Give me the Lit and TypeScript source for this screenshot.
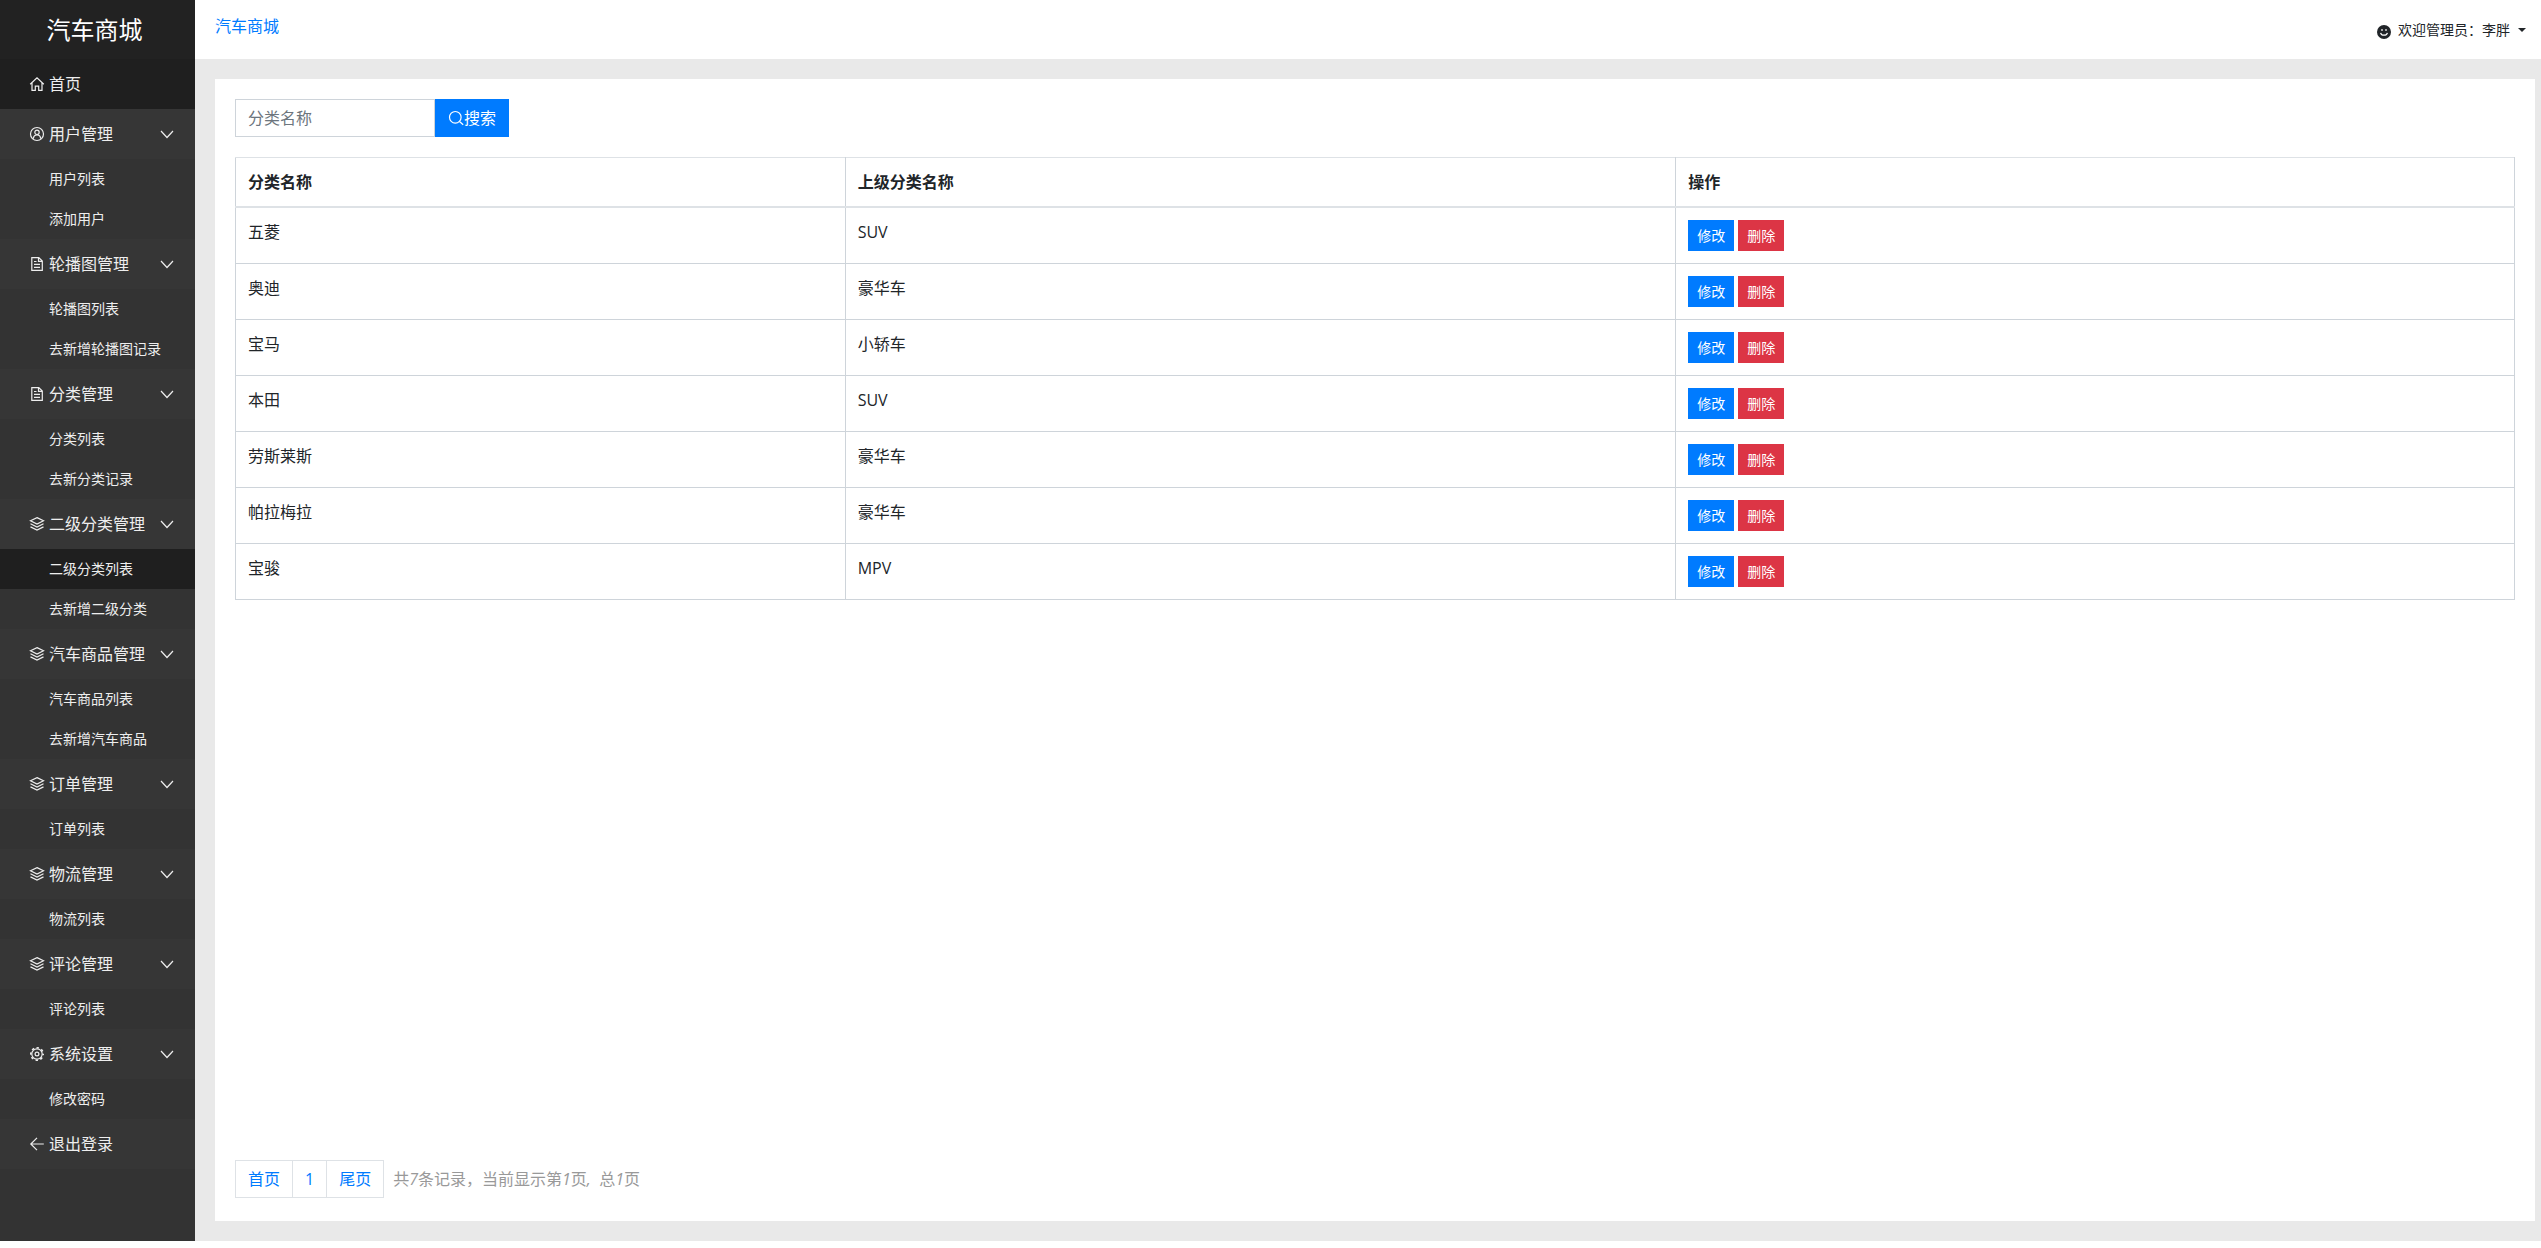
import { LitElement, html, css, svg, nothing } from "lit";
import { customElement, property, state } from "lit/decorators.js";
import { classMap } from "lit/directives/class-map.js";

type IconName = "home" | "user" | "doc" | "layers" | "gear" | "back" | "search" | "smile" | "chevron";

interface MenuGroup {
  icon: IconName;
  label: string;
  items?: string[];
}

const MENU: MenuGroup[] = [
  { icon: "home", label: "首页" },
  { icon: "user", label: "用户管理", items: ["用户列表", "添加用户"] },
  { icon: "doc", label: "轮播图管理", items: ["轮播图列表", "去新增轮播图记录"] },
  { icon: "doc", label: "分类管理", items: ["分类列表", "去新分类记录"] },
  { icon: "layers", label: "二级分类管理", items: ["二级分类列表", "去新增二级分类"] },
  { icon: "layers", label: "汽车商品管理", items: ["汽车商品列表", "去新增汽车商品"] },
  { icon: "layers", label: "订单管理", items: ["订单列表"] },
  { icon: "layers", label: "物流管理", items: ["物流列表"] },
  { icon: "layers", label: "评论管理", items: ["评论列表"] },
  { icon: "gear", label: "系统设置", items: ["修改密码"] },
  { icon: "back", label: "退出登录" },
];

const ROWS: [string, string][] = [
  ["五菱", "SUV"],
  ["奥迪", "豪华车"],
  ["宝马", "小轿车"],
  ["本田", "SUV"],
  ["劳斯莱斯", "豪华车"],
  ["帕拉梅拉", "豪华车"],
  ["宝骏", "MPV"],
];

const SHAPES = {
  home: svg`<path d="M1.200 8.200 8 1.800l6.800 6.400M3 7v7.400h3.300v-4.200h3.400v4.200H13V7"/>`,
  user: svg`<circle cx="8" cy="8" r="6.500"/><circle cx="8" cy="6.300" r="2.200"/><path d="M4.300 12.800c.2-2.600 1.600-4 3.700-4s3.500 1.400 3.700 4"/>`,
  doc: svg`<path d="M2.800 1.600h7l3.500 3.500v9.300H2.800zM9.500 1.800v3.600h3.600M5 5.500h2.500M5 8.300h6M5 11.300h6"/>`,
  layers: svg`<path d="M8 1.600 14.500 4.800 8 8 1.500 4.800zM1.500 7.800 8 11l6.500-3.200M1.500 10.900 8 14.100l6.500-3.200"/>`,
  gear: svg`<circle cx="8" cy="8" r="5.200"/><circle cx="8" cy="8" r="6.200" stroke-width="1.600" stroke-dasharray="2.435" stroke-dashoffset="1.217"/><circle cx="8" cy="8" r="1.900"/>`,
  back: svg`<path d="M14.800 8H2M8 1.800 1.800 8 8 14.200"/>`,
  search: svg`<circle cx="7.300" cy="7.300" r="5.800"/><path d="m11.500 11.500 3.700 3.300"/>`,
  smile: svg`<circle cx="8" cy="8" r="7" fill="currentColor" stroke="none"/><g stroke="#fff"><path d="M6 5v2M10 5v2M4.600 8.800c.8 3.200 6 3.200 6.800 0"/></g>`,
  chevron: svg`<path d="m2 5 6 6.500L14 5"/>`,
};

@customElement("ui-icon")
export class UiIcon extends LitElement {
  @property() name: IconName = "home";

  static styles = css`
    :host {
      display: inline-flex;
      flex: none;
      width: 16px;
      height: 16px;
    }
    .icon {
      width: 100%;
      height: 100%;
      fill: none;
      stroke: currentColor;
      stroke-width: 1.2;
    }
  `;

  render() {
    return html`<svg class="icon" viewBox="0 0 16 16" aria-hidden="true">${SHAPES[this.name]}</svg>`;
  }
}

@customElement("side-menu")
export class SideMenu extends LitElement {
  @state() private closed = new Set<string>();
  @property() current = "";

  static styles = css`
    :host {
      display: block;
      background: #333;
      color: #eee;
    }
    .brand {
      display: flex;
      align-items: center;
      justify-content: center;
      height: 59px;
      padding: 0 6px 0 0;
      box-sizing: border-box;
      background: #222;
      color: #fff;
      font-size: 24px;
    }
    .head {
      display: flex;
      align-items: center;
      gap: 4px;
      width: 100%;
      height: 50px;
      padding: 0 20px 0 29px;
      box-sizing: border-box;
      border: 0;
      background: #363636;
      color: inherit;
      font: inherit;
      text-align: left;
      text-decoration: none;
      cursor: pointer;
    }
    .label {
      flex: 1;
    }
    .head.home {
      background: #1f1f1f;
    }
    .item {
      display: flex;
      align-items: center;
      height: 40px;
      padding-left: 49px;
      color: inherit;
      font-size: 14px;
      text-decoration: none;
    }
    .item.current {
      background: #1f1f1f;
    }
  `;

  private toggle(label: string) {
    const next = new Set(this.closed);
    if (!next.delete(label)) next.add(label);
    this.closed = next;
  }

  private group(g: MenuGroup) {
    if (!g.items) {
      return html`<a class=${classMap({ head: true, home: g.icon === "home" })} href="#">
        <ui-icon name=${g.icon}></ui-icon><span class="label">${g.label}</span>
      </a>`;
    }
    const open = !this.closed.has(g.label);
    return html`
      <button class="head" type="button" aria-expanded=${open} @click=${() => this.toggle(g.label)}>
        <ui-icon name=${g.icon}></ui-icon><span class="label">${g.label}</span>
        <ui-icon name="chevron"></ui-icon>
      </button>
      ${open
        ? g.items.map(
            (i) => html`<a class=${classMap({ item: true, current: i === this.current })} href="#">${i}</a>`
          )
        : nothing}
    `;
  }

  render() {
    return html`
      <div class="brand">汽车商城</div>
      <nav>${MENU.map((g) => this.group(g))}</nav>
    `;
  }
}

@customElement("app-root")
export class AppRoot extends LitElement {
  static styles = css`
    :host {
      display: flex;
      min-height: calc(100vh - 7px);
      margin-bottom: 7px;
      background: #e9e9e9;
      color: #212529;
      font: 16px/24px "Open Sans", "Noto Sans CJK SC", sans-serif;
    }
    .side {
      flex: 0 0 195px;
    }
    .main {
      flex: 1;
      min-width: 0;
      display: flex;
      flex-direction: column;
    }
    .top {
      display: flex;
      justify-content: space-between;
      height: 59px;
      padding: 0 15px 0 20px;
      box-sizing: border-box;
      background: #fff;
    }
    a {
      color: #007bff;
      text-decoration: none;
    }
    .crumb {
      padding-top: 14px;
    }
    .account {
      display: flex;
      align-items: center;
      padding: 0;
      border: 0;
      background: none;
      color: inherit;
      font: inherit;
      font-size: 14px;
    }
    .face {
      margin: 4px 6px 0 0;
    }
    .caret {
      margin-left: 8px;
      border: 4px solid transparent;
      border-top-color: currentColor;
      border-bottom: 0;
    }
    .panel {
      flex: 1;
      display: flex;
      flex-direction: column;
      gap: 20px;
      margin: 20px 6px 20px 20px;
      padding: 20px 20px 23px;
      background: #fff;
    }
    .search {
      display: flex;
    }
    .field {
      width: 200px;
      height: 38px;
      padding: 6px 12px;
      box-sizing: border-box;
      border: 1px solid #ced4da;
      border-radius: 0;
      color: #495057;
      font: inherit;
    }
    .field::placeholder {
      color: #6c757d;
      opacity: 1;
    }
    .btn {
      display: inline-flex;
      align-items: center;
      padding: 6px 12px;
      border: 1px solid #007bff;
      background: #007bff;
      color: #fff;
      font: inherit;
      cursor: pointer;
    }
    .small {
      padding: 4px 8px;
      font-size: 14px;
      line-height: 21px;
    }
    .danger {
      border-color: #dc3545;
      background: #dc3545;
    }
    .table {
      width: 100%;
      border-collapse: collapse;
    }
    .col-name {
      width: 26.75%;
    }
    .col-parent {
      width: 36.45%;
    }
    .table th,
    .table td {
      padding: 12px;
      border: 1px solid #ced4da;
      text-align: left;
      vertical-align: top;
    }
    .table th {
      border-top-color: #dee2e6;
      border-bottom: 2px solid #dee2e6;
      font-weight: 700;
    }
    .actions {
      display: flex;
      gap: 4px;
    }
    .pager {
      display: flex;
      align-items: center;
      gap: 9px;
      margin-top: auto;
      color: #999;
    }
    .pages {
      display: flex;
      margin: 0;
      padding: 0 0 0 1px;
      list-style: none;
    }
    .page {
      display: block;
      margin-left: -1px;
      padding: 8px 12px;
      border: 1px solid #dee2e6;
      line-height: 20px;
    }
  `;

  render() {
    return html`
      <side-menu class="side" current="二级分类列表"></side-menu>
      <div class="main">
        <header class="top">
          <a class="crumb" href="#">汽车商城</a>
          <button class="account" type="button" aria-haspopup="true">
            <ui-icon class="face" name="smile"></ui-icon>
            <span>欢迎管理员：李胖</span>
            <span class="caret"></span>
          </button>
        </header>
        <main class="panel">
          <form class="search" @submit=${(e: Event) => e.preventDefault()}>
            <input class="field" type="text" placeholder="分类名称" aria-label="分类名称" />
            <button class="btn" type="submit"><ui-icon name="search"></ui-icon>搜索</button>
          </form>
          <table class="table">
            <thead>
              <tr><th class="col-name">分类名称</th><th class="col-parent">上级分类名称</th><th>操作</th></tr>
            </thead>
            <tbody>
              ${ROWS.map(
                ([name, parent]) => html`<tr>
                  <td>${name}</td>
                  <td>${parent}</td>
                  <td>
                    <div class="actions">
                      <button class="btn small" type="button">修改</button>
                      <button class="btn small danger" type="button">删除</button>
                    </div>
                  </td>
                </tr>`
              )}
            </tbody>
          </table>
          <div class="pager">
            <ul class="pages">
              ${["首页", "1", "尾页"].map((p) => html`<li><a class="page" href="#">${p}</a></li>`)}
            </ul>
            <span>共<i>7</i>条记录，当前显示第<i>1</i>页<i>, </i>&nbsp;总<i>1</i>页</span>
          </div>
        </main>
      </div>
    `;
  }
}
